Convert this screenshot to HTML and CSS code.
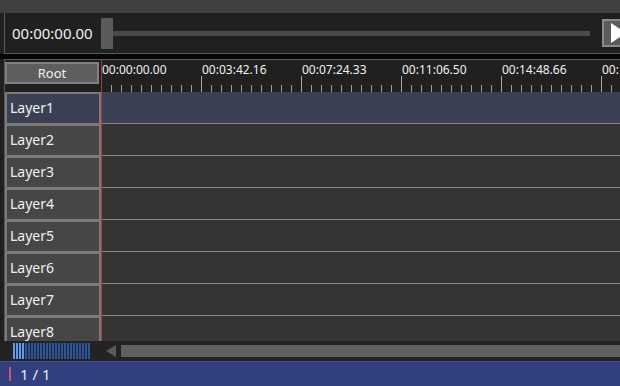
FILE: index.html
```html
<!DOCTYPE html>
<html>
<head>
<meta charset="utf-8">
<link rel="stylesheet" href="styles.css">
</head>
<body>
<div class="app">
  <div class="topband"></div>
  <div class="transport">
    <div class="time">00:00:00.00</div>
    <div class="slider">
      <div class="thumb"></div>
      <div class="track"></div>
    </div>
    <div class="play"><svg width="26" height="26" viewBox="0 0 26 26"><polygon points="5,3 5,23 20,13" fill="#ffffff"/></svg></div>
  </div>
  <div class="gap"></div>
  <div class="timeline">
    <div class="heads">
      <div class="rootcell"><div class="rootbtn">Root</div></div>
      <div class="layer sel">Layer1</div>
      <div class="layer">Layer2</div>
      <div class="layer">Layer3</div>
      <div class="layer">Layer4</div>
      <div class="layer">Layer5</div>
      <div class="layer">Layer6</div>
      <div class="layer">Layer7</div>
      <div class="layer">Layer8</div>
    </div>
    <div class="tracks">
      <div class="ruler">
        <div class="labels">
          <span>00:00:00.00</span>
          <span>00:03:42.16</span>
          <span>00:07:24.33</span>
          <span>00:11:06.50</span>
          <span>00:14:48.66</span>
          <span>00:18:30.83</span>
        </div>
      </div>
      <div class="row sel"></div>
      <div class="row"></div>
      <div class="row"></div>
      <div class="row"></div>
      <div class="row"></div>
      <div class="row"></div>
      <div class="row"></div>
      <div class="row"></div>
    </div>
  </div>
  <div class="scrollbar">
    <div class="meter"></div>
    <div class="arrow"></div>
    <div class="sthumb"></div>
  </div>
  <div class="status">
    <div class="mark"></div>
    <div class="page">1 / 1</div>
  </div>
</div>
</body>
</html>
```

FILE: styles.css
```css
html, body {
  margin: 0;
  padding: 0;
  background: #202020;
  overflow: hidden;
}
.app {
  width: 620px;
  height: 386px;
  overflow: hidden;
  font-family: "Noto Sans", "Open Sans", sans-serif;
  color: #f0f0f0;
  display: flex;
  flex-direction: column;
}
.topband {
  height: 13px;
  background: #404040;
  flex: none;
}
.transport {
  flex: none;
  height: 40px;
  margin-left: 4px;
  border-left: 1px solid #5a5a5a;
  border-bottom: 1px solid #5a5a5a;
  background: #202020;
  display: flex;
  align-items: center;
  padding-left: 7px;
  overflow: hidden;
}
.time {
  flex: none;
  width: 89px;
  font-size: 15px;
  line-height: 20px;
  white-space: nowrap;
}
.slider {
  flex: none;
  width: 489px;
  height: 32px;
  display: flex;
  align-items: center;
}
.thumb {
  flex: none;
  width: 12px;
  height: 31px;
  background: #5a5a5a;
}
.track {
  flex: none;
  width: 477px;
  height: 5px;
  background: #4a4a4a;
}
.play {
  margin-left: 12px;
  width: 24px;
  height: 24px;
  border: 2px solid #8a8a8a;
  background: #5c5c5c;
  flex: none;
  overflow: hidden;
}
.play svg { display: block; margin-left: 2px; margin-top: -1px; }
.gap {
  flex: none;
  height: 5px;
  background: #060606;
}
.timeline {
  flex: none;
  height: 281px;
  margin-left: 4px;
  border-left: 1px solid #5a5a5a;
  border-top: 1px solid #5a5a5a;
  display: flex;
  overflow: hidden;
}
.heads {
  width: 96px;
  flex: none;
  display: flex;
  flex-direction: column;
}
.rootcell {
  height: 32px;
  flex: none;
  padding: 2px 2px 0 0;
  box-sizing: border-box;
}
.rootbtn {
  height: 22px;
  box-sizing: border-box;
  border: 2px solid #808080;
  background: #5e5e5e;
  text-align: center;
  font-size: 13px;
  line-height: 18px;
  color: #f2f2f2;
}
.layer {
  flex: none;
  height: 32px;
  box-sizing: border-box;
  border: 2px solid #7a7a7a;
  border-bottom-width: 1px;
  background: #464646;
  font-size: 14px;
  line-height: 28px;
  padding-left: 3px;
}
.layer.sel { background: #3c4055; }
.tracks {
  flex: 1;
  border-left: 1px solid #b03838;
  display: flex;
  flex-direction: column;
}
.ruler {
  height: 32px;
  flex: none;
  background:
    repeating-linear-gradient(90deg, transparent 0 99px, #a8a8a8 99px 100px) 0 16px / 100% 16px no-repeat,
    repeating-linear-gradient(90deg, transparent 0 9px, #a0a0a0 9px 10px) 0 25px / 100% 7px no-repeat;
}
.labels {
  display: flex;
  font-size: 12px;
  line-height: 16px;
  padding-top: 2px;
  white-space: nowrap;
}
.labels span { width: 100px; flex: none; }
.row {
  flex: none;
  height: 32px;
  box-sizing: border-box;
  background: #343434;
  border-bottom: 1px solid #868686;
}
.row.sel { background: #3c4055; }
.scrollbar {
  flex: none;
  height: 20px;
  background: #232323;
  display: flex;
  align-items: center;
  padding-left: 13px;
}
.meter {
  width: 78px;
  height: 16px;
  background:
    repeating-linear-gradient(90deg, #5a9af0 0 2px, transparent 2px 3px) 0 0 / 12px 100% no-repeat,
    repeating-linear-gradient(90deg, #2a55a0 0 2px, transparent 2px 3px);
}
.arrow {
  margin-left: 15px;
  width: 0;
  height: 0;
  border-top: 6px solid transparent;
  border-bottom: 6px solid transparent;
  border-right: 10px solid #5a5a5a;
}
.sthumb {
  margin-left: 5px;
  flex: 1;
  height: 12px;
  background: #606060;
}
.status {
  flex: none;
  height: 24px;
  background: #313f7f;
  border-top: 1px solid #4a5280;
  border-bottom: 1px solid #6a6a6a;
  display: flex;
  align-items: center;
}
.mark {
  width: 2px;
  height: 14px;
  background: #d05080;
  margin-left: 9px;
}
.page {
  margin-left: 9px;
  font-size: 15px;
  color: #e8e8f0;
}
```
